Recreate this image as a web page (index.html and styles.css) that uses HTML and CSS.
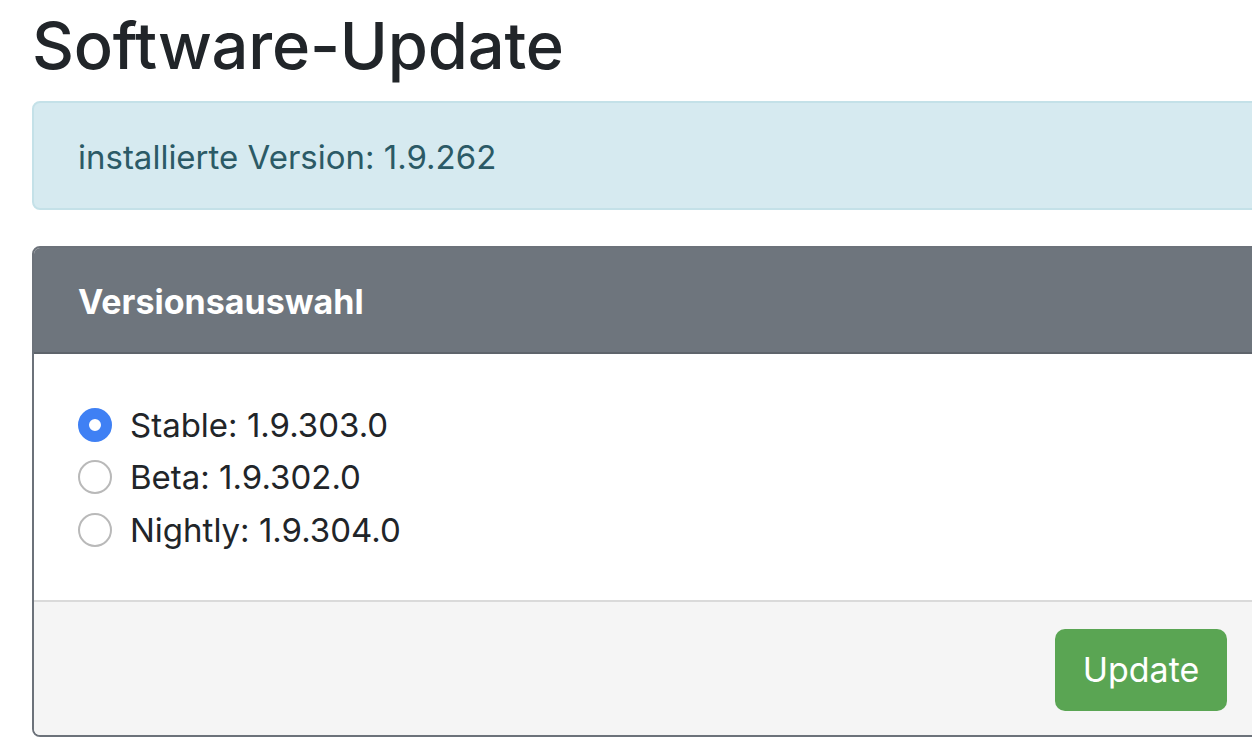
FILE: index.html
```html
<!DOCTYPE html>
<html lang="de">
<head>
  <meta charset="UTF-8" />
  <meta name="viewport" content="width=device-width, initial-scale=1.0"/>
  <title>Software-Update</title>
  <link rel="stylesheet" href="styles.css">
</head>
<body>
  <div class="page">
    <h1>Software-Update</h1>

    <div class="alert">installierte Version: 1.9.262</div>

    <!-- Versionsauswahl -->
    <form class="card" onsubmit="return false">
      <div class="card-header">Versionsauswahl</div>
      <div class="card-body">
        <label class="option"><input type="radio" name="channel" value="stable" checked> Stable: 1.9.303.0</label>
        <label class="option"><input type="radio" name="channel" value="beta"> Beta: 1.9.302.0</label>
        <label class="option"><input type="radio" name="channel" value="nightly"> Nightly: 1.9.304.0</label>
      </div>
      <div class="card-footer">
        <button type="submit">Update</button>
      </div>
    </form>
  </div>
</body>
</html>
```

FILE: styles.css
```css
html, body {
  overflow: hidden;
}

body {
  margin: 0;
  font-family: 'Inter', 'Liberation Sans', sans-serif;
  color: #212529;
  background: #fff;
}

.page {
  width: 1237px;
  margin-left: 32px;
}

h1 {
  font-size: 65px;
  font-weight: 500;
  line-height: 1.2;
  margin: 7px 0 0;
  letter-spacing: -0.2px;
}

.alert {
  margin-top: 16px;
  background-color: #d6eaf0;
  border: 2px solid #c4e1e8;
  border-radius: 8px;
  color: #2b5a66;
  font-size: 33px;
  padding: 35px 44px 30px;
  line-height: 1.2;
}

.card {
  display: block;
  margin-top: 36px;
  border: 2px solid #6c727a;
  border-radius: 8px;
  overflow: hidden;
}

.card-header {
  background-color: #6e757d;
  color: #fff;
  font-weight: 700;
  font-size: 34px;
  padding: 34px 44px 30px;
  line-height: 1.2;
  border-bottom: 2px solid #5e646b;
}

.card-body {
  display: flex;
  flex-direction: column;
  padding: 44px 44px 44px;
  background: #fff;
}

.option {
  display: flex;
  align-items: center;
  gap: 18px;
  font-size: 33px;
  height: 52.5px;
  cursor: pointer;
}

.option input {
  appearance: none;
  -webkit-appearance: none;
  width: 34px;
  height: 34px;
  margin: 0;
  border: 2px solid #b9b9b9;
  border-radius: 50%;
  background: #fff;
}

.option input:checked {
  border: 11px solid #3f80f4;
  background: #fff;
}

.card-footer {
  display: flex;
  justify-content: flex-end;
  background-color: #f5f5f5;
  border-top: 2px solid #dadada;
  padding: 27px 40px 24px;
}

button {
  background-color: #5aa553;
  color: #fff;
  border: none;
  border-radius: 10px;
  font-family: inherit;
  font-size: 34px;
  width: 172px;
  height: 82px;
  cursor: pointer;
}
```
